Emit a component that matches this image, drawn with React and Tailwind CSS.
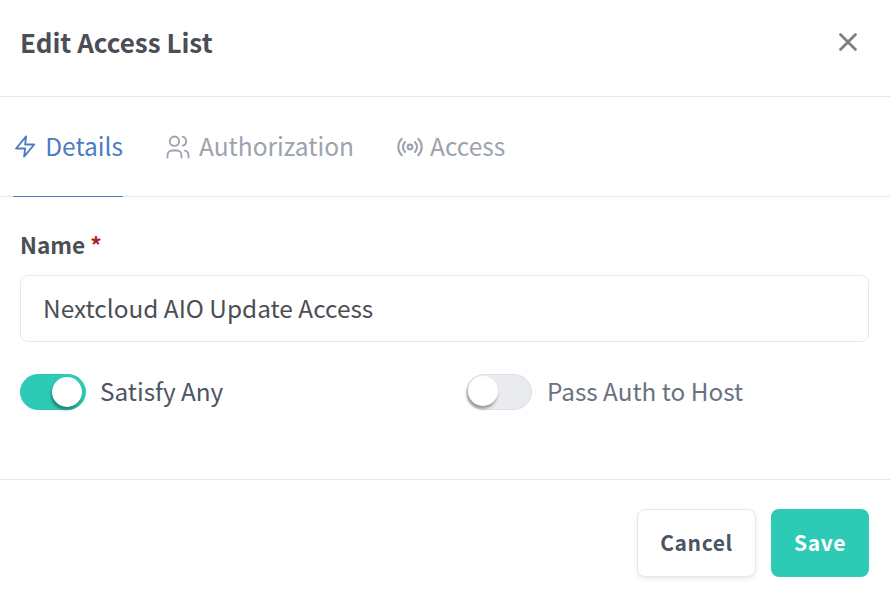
import { FiZap } from 'react-icons/fi';
import { TbUsers } from 'react-icons/tb';
import { X, Radio } from 'lucide-react';

const font = "font-['Noto_Sans_CJK_SC','Liberation_Sans',sans-serif]";

function Toggle({ on, label }) {
  return (
    <div className={`flex items-center ${on ? 'gap-[14px]' : 'gap-[15px]'}`}>
      <div
        className={`flex h-[36px] w-[66px] items-center rounded-full border ${on ? 'justify-end border-[#2dcab5] bg-[#2dcab5] pr-[3px] pb-[1px]' : 'justify-start border-[#dcdfe3] bg-[#e9ebee] pb-[2px] pl-[1px]'}`}
      >
        <div className="h-[30px] w-[30px] rounded-full bg-white shadow-[-1px_3px_3px_rgba(0,0,0,0.35)]"></div>
      </div>
      <span className={`-mt-[3px] text-[24.3px] leading-[36px] ${on ? 'text-[#4b5563]' : 'text-[#6b7280]'}`}>{label}</span>
    </div>
  );
}

export default function App() {
  return (
    <div className={`${font} flex h-[589px] w-[890px] flex-col overflow-hidden bg-white`}>
      {/* Header */}
      <div className="flex h-[97px] items-center justify-between border-b border-[#e5e7eb] pb-[13px] pl-[20px] pr-[27px]">
        <h1 className="text-[26px] font-bold text-[#4b4f55]">Edit Access List</h1>
        <X size={30} strokeWidth={2.2} className="text-[#7b7f85]" />
      </div>

      {/* Tabs */}
      <div className="flex h-[100px] border-b border-[#e5e7eb] pl-[13px] text-[24.5px]">
        <div className="-mb-[1px] flex h-[100px] w-[110px] items-center gap-[8px] border-b border-[#4a7cc4] text-[#4a7cc4]">
          <FiZap size={25} strokeWidth={1.8} />
          <span>Details</span>
        </div>
        <div className="ml-[41px] flex items-center gap-[7px] text-[#9ca3af]">
          <TbUsers size={28} strokeWidth={1.6} />
          <span>Authorization</span>
        </div>
        <div className="ml-[42px] flex items-center gap-[6px] text-[#9ca3af]">
          <Radio size={28} strokeWidth={1.8} />
          <span>Access</span>
        </div>
      </div>

      {/* Form */}
      <div className="flex flex-1 flex-col px-[20px] pt-[31px]">
        <label className="text-[22.6px] font-bold leading-[34px] text-[#4b4f55]">
          Name <span className="text-[#b91c1c]">*</span>
        </label>
        <div className="mt-[13px] flex h-[67px] w-[849px] items-center rounded-[8px] border border-[#e5e7eb] px-[22px] text-[24.4px] text-[#4b4f55]">
          Nextcloud AIO Update Access
        </div>
        <div className="mt-[32px] grid grid-cols-[446px_1fr]">
          <Toggle on label="Satisfy Any" />
          <Toggle label="Pass Auth to Host" />
        </div>
      </div>

      {/* Footer */}
      <div className="flex h-[110px] justify-end gap-[15px] border-t border-[#e5e7eb] pr-[21px] pt-[29px]">
        <button className="h-[68px] w-[119px] rounded-[8px] border border-[#e5e7eb] bg-white text-[21px] font-bold tracking-[0.6px] text-[#4b5563] shadow-[0_2px_4px_rgba(0,0,0,0.08)]">
          Cancel
        </button>
        <button className="h-[68px] w-[98px] rounded-[8px] bg-[#2dcab5] text-[21px] font-bold tracking-[0.6px] text-white">
          Save
        </button>
      </div>
    </div>
  );
}
